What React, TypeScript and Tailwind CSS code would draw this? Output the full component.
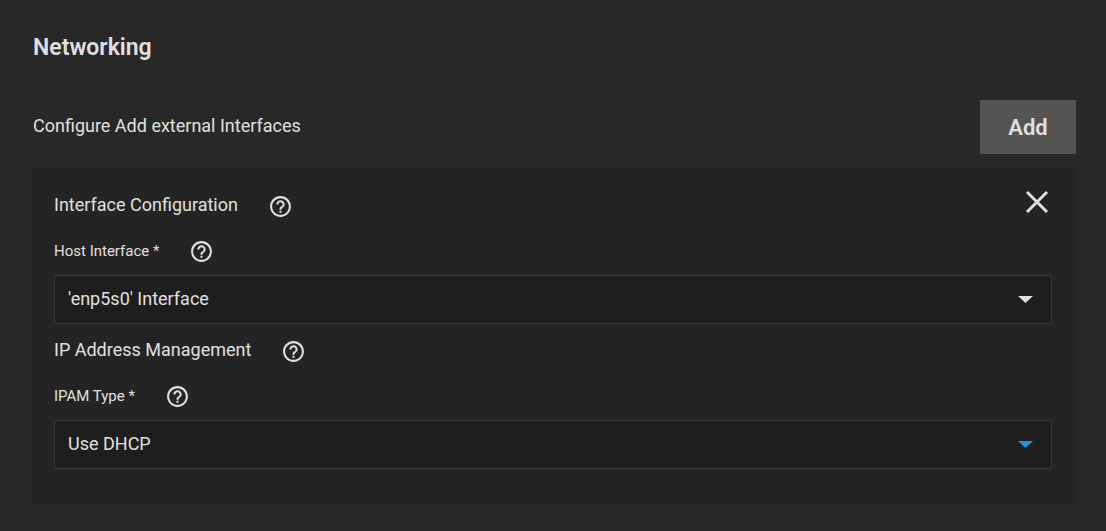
import { useState } from "react";
import { MdHelpOutline } from "react-icons/md";

type HelpTitleProps = {
  title: string;
};

type SelectFieldProps = {
  id: string;
  label: string;
  options: string[];
  arrowClassName: string;
};

function HelpButton({ topic }: { topic: string }) {
  return (
    <button type="button" aria-label={`Help: ${topic}`}>
      <MdHelpOutline className="size-[25px]" />
    </button>
  );
}

function HelpTitle({ title }: HelpTitleProps) {
  return (
    <div className="flex h-[42px] items-center gap-[30px]">
      <h3 className="pb-0.5 text-lg leading-6">{title}</h3>
      <HelpButton topic={title} />
    </div>
  );
}

function SelectField({ id, label, options, arrowClassName }: SelectFieldProps) {
  const [value, setValue] = useState(options[0]);

  return (
    <div>
      <div className="flex h-12 items-center gap-[30px]">
        <label htmlFor={id} className="text-[15px] leading-6">
          {label} *
        </label>
        <HelpButton topic={label} />
      </div>
      <div className="relative">
        <select
          id={id}
          value={value}
          onChange={(e) => setValue(e.target.value)}
          className="block h-[49px] w-full appearance-none border border-[#383838] bg-[#1e1e1e] pr-12
            pb-0.5 pl-[13px] text-lg outline-none"
        >
          {options.map((option) => (
            <option key={option}>{option}</option>
          ))}
        </select>
        <svg
          className={`pointer-events-none absolute top-[21px] right-[19px] h-[7px] w-[15px] ${arrowClassName}`}
          aria-hidden="true"
          fill="currentColor"
          viewBox="0 0 15 7"
        >
          <path d="M0 0h15L7.5 7z" />
        </svg>
      </div>
    </div>
  );
}

export default function App() {
  return (
    <main
      className="min-h-screen bg-[#282828] pt-8 pr-[30px] pb-[27px] pl-8 text-[#e0e0e0]
        font-[Roboto,sans-serif]"
    >
      <h2 className="pl-px text-[23px] leading-8 font-semibold">Networking</h2>

      <div className="mt-9 flex items-center justify-between">
        <p className="pb-0.5 pl-px text-lg leading-6">
          Configure Add external Interfaces
        </p>
        <button
          type="button"
          className="h-[54px] w-24 bg-[#545454] text-[22px] font-semibold"
        >
          Add
        </button>
      </div>

      <section className="mt-[15px] mr-px bg-[#242424] pt-4 pr-[23px] pb-[35px] pl-[22px]">
        <div className="flex items-start justify-between">
          <HelpTitle title="Interface Configuration" />
          <button
            type="button"
            aria-label="Remove interface"
            className="px-[3px] py-[5px]"
          >
            <svg
              className="size-[24px]"
              aria-hidden="true"
              fill="none"
              stroke="currentColor"
              strokeWidth="3"
              viewBox="0 0 24 24"
            >
              <path d="M2 2l20 20M22 2L2 22" />
            </svg>
          </button>
        </div>
        <SelectField
          id="host-interface"
          label="Host Interface"
          options={["'enp5s0' Interface"]}
          arrowClassName="text-[#e0e0e0]"
        />
        <div className="mt-1.5">
          <HelpTitle title="IP Address Management" />
        </div>
        <SelectField
          id="ipam-type"
          label="IPAM Type"
          options={["Use DHCP"]}
          arrowClassName="text-[#2196d6]"
        />
      </section>
    </main>
  );
}
